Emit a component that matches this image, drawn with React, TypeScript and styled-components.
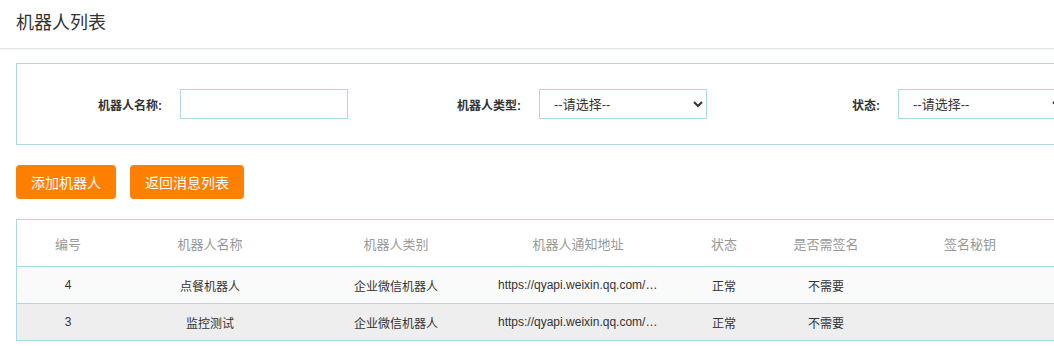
import React from "react";
import styled, { createGlobalStyle } from "styled-components";

const GlobalStyle = createGlobalStyle`
    html, body {
        margin: 0;
        padding: 0;
        background-color: #ffffff;
        overflow: hidden;
    }
    body {
        font-family: "Liberation Sans", "Noto Sans CJK SC", sans-serif;
        color: #333;
    }
`;

const Page = styled.div`
    width: 1120px;
`;

const Header = styled.div`
    height: 49px;
    padding-left: 16px;
    border-bottom: 1px solid #e3e3e3;
    box-shadow: 0 1px 2px rgba(0, 0, 0, 0.05);
    box-sizing: border-box;
`;

const Title = styled.h1`
    margin: 0;
    padding-top: 13px;
    font-size: 18px;
    line-height: 21px;
    font-weight: normal;
    color: #333;
`;

const Content = styled.div`
    padding: 14px 16px 0 16px;
`;

const FilterPanel = styled.div`
    display: flex;
    padding: 25px 0 25px 0;
    border: 1px solid #add8e6;
`;

const FilterGroup = styled.div`
    display: flex;
    align-items: center;
    width: 359px;
`;

const FilterLabel = styled.label`
    width: 145px;
    padding-right: 18px;
    text-align: right;
    font-size: 12px;
    font-weight: bold;
    color: #333;
`;

const TextInput = styled.input`
    width: 168px;
    height: 30px;
    box-sizing: border-box;
    border: 1px solid #add8e6;
    outline: none;
`;

const Select = styled.select`
    width: 168px;
    height: 30px;
    box-sizing: border-box;
    padding-left: 10px;
    border: 1px solid #add8e6;
    border-radius: 0;
    background-color: #fff;
    color: #333;
    font-size: 13px;
    font-family: "Liberation Sans", "Noto Sans CJK SC", sans-serif;
    outline: none;
`;

const ButtonBar = styled.div`
    display: flex;
    gap: 14px;
    margin-top: 20px;
`;

const ActionBtn = styled.button`
    height: 34px;
    padding: 0 15px;
    border: none;
    border-radius: 4px;
    background-color: #ff8000;
    color: #fff;
    font-size: 14px;
    font-family: "Liberation Sans", "Noto Sans CJK SC", sans-serif;
    cursor: pointer;
`;

const Table = styled.table`
    margin-top: 20px;
    border-collapse: collapse;
    table-layout: fixed;
    border: 1px solid #add8e6;
`;

const HeadCell = styled.th<{ w: number }>`
    width: ${(p) => p.w}px;
    height: 46px;
    padding: 0;
    font-size: 13px;
    font-weight: normal;
    color: #999;
    text-align: center;
    border-bottom: 1px solid #add8e6;
`;

const Row = styled.tr<{ shade: string }>`
    background-color: ${(p) => p.shade};
    border-bottom: 1px solid #add8e6;
`;

const Cell = styled.td`
    height: 36px;
    padding: 0;
    font-size: 12px;
    color: #333;
    text-align: center;
`;

const UrlText = styled.span`
    display: inline-block;
    width: 160px;
    overflow: hidden;
    white-space: nowrap;
    text-overflow: ellipsis;
    vertical-align: middle;
`;

const columns = [
    { title: "编号", w: 102 },
    { title: "机器人名称", w: 182 },
    { title: "机器人类别", w: 190 },
    { title: "机器人通知地址", w: 174 },
    { title: "状态", w: 118 },
    { title: "是否需签名", w: 86 },
    { title: "签名秘钥", w: 202 },
];

const robots = [
    {
        id: 4,
        name: "点餐机器人",
        type: "企业微信机器人",
        url: "https://qyapi.weixin.qq.com/cgi-bin/webhook/send?key=7a1c",
        status: "正常",
        sign: "不需要",
        secret: "",
    },
    {
        id: 3,
        name: "监控测试",
        type: "企业微信机器人",
        url: "https://qyapi.weixin.qq.com/cgi-bin/webhook/send?key=93bd",
        status: "正常",
        sign: "不需要",
        secret: "",
    },
];

const App = () => {
    return (
        <Page>
            <GlobalStyle />
            <Header>
                <Title>机器人列表</Title>
            </Header>
            <Content>
                <FilterPanel>
                    <FilterGroup>
                        <FilterLabel>机器人名称:</FilterLabel>
                        <TextInput type="text" />
                    </FilterGroup>
                    <FilterGroup>
                        <FilterLabel>机器人类型:</FilterLabel>
                        <Select defaultValue="">
                            <option value="">--请选择--</option>
                            <option value="wx">企业微信机器人</option>
                        </Select>
                    </FilterGroup>
                    <FilterGroup>
                        <FilterLabel>状态:</FilterLabel>
                        <Select defaultValue="">
                            <option value="">--请选择--</option>
                            <option value="1">正常</option>
                        </Select>
                    </FilterGroup>
                </FilterPanel>
                <ButtonBar>
                    <ActionBtn>添加机器人</ActionBtn>
                    <ActionBtn>返回消息列表</ActionBtn>
                </ButtonBar>
                <Table>
                    <thead>
                        <tr>
                            {columns.map((c) => (
                                <HeadCell key={c.title} w={c.w}>
                                    {c.title}
                                </HeadCell>
                            ))}
                        </tr>
                    </thead>
                    <tbody>
                        {robots.map((r, i) => (
                            <Row key={r.id} shade={i % 2 === 0 ? "#fafafa" : "#eeeeee"}>
                                <Cell>{r.id}</Cell>
                                <Cell>{r.name}</Cell>
                                <Cell>{r.type}</Cell>
                                <Cell>
                                    <UrlText>{r.url}</UrlText>
                                </Cell>
                                <Cell>{r.status}</Cell>
                                <Cell>{r.sign}</Cell>
                                <Cell>{r.secret}</Cell>
                            </Row>
                        ))}
                    </tbody>
                </Table>
            </Content>
        </Page>
    );
};

export default App;
